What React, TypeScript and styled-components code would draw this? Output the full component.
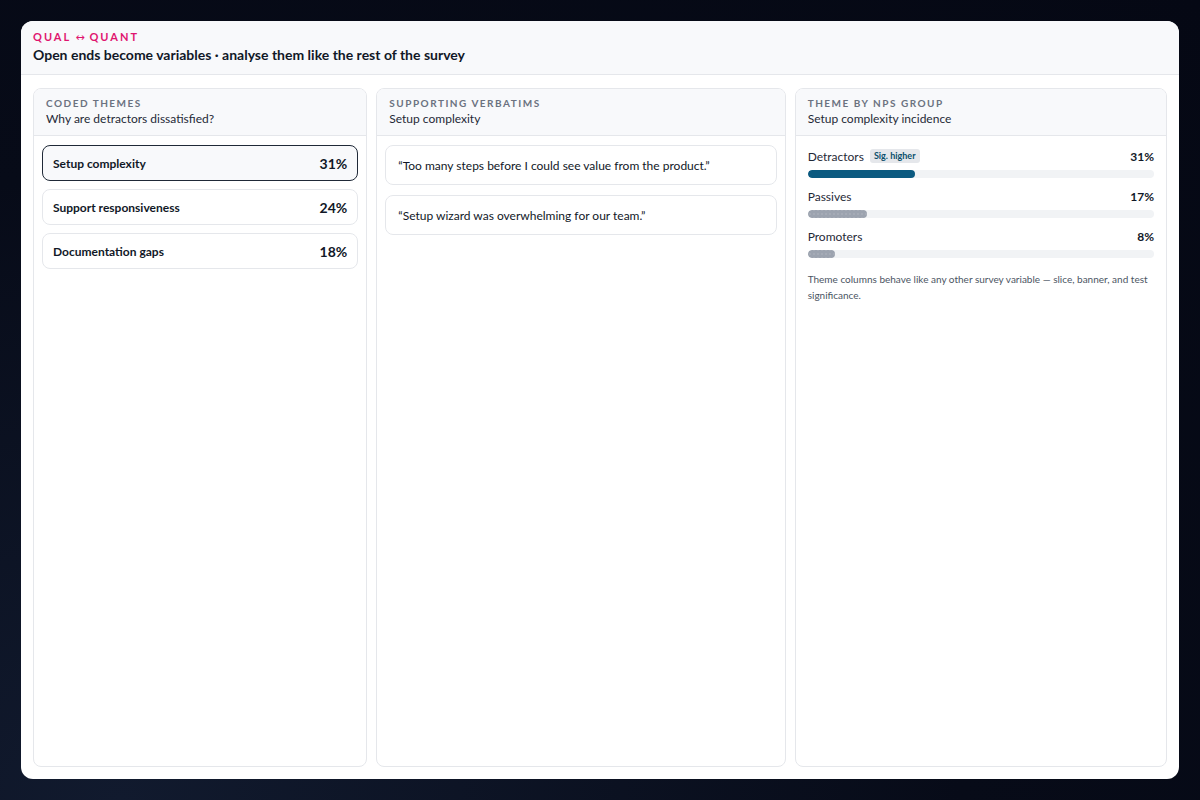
import React from 'react';
import styled, {createGlobalStyle} from 'styled-components';

type Theme = {label: string; share: number; active?: boolean};
type Group = {label: string; share: number; sig?: boolean; primary?: boolean};

const themes: Theme[] = [
  {label: 'Setup complexity', share: 31, active: true},
  {label: 'Support responsiveness', share: 24},
  {label: 'Documentation gaps', share: 18},
];

const verbatims = [
  '\u201CToo many steps before I could see value from the product.\u201D',
  '\u201CSetup wizard was overwhelming for our team.\u201D',
];

const groups: Group[] = [
  {label: 'Detractors', share: 31, sig: true, primary: true},
  {label: 'Passives', share: 17},
  {label: 'Promoters', share: 8},
];

const GlobalStyle = createGlobalStyle`
  * { box-sizing: border-box; }
  html, body {
    margin: 0;
    height: 100%;
  }
  body {
    font-family: Lato, 'Noto Sans', 'Liberation Sans', sans-serif;
    color: #111827;
    background: radial-gradient(ellipse at 10% 100%, #111a2e 0%, #070b18 55%, #050814 100%);
  }
  #root {
    height: 100%;
  }
`;

export default function App() {
  return (
    <>
      <GlobalStyle />
      <Page>
        <Card>
          <Header>
            <Eyebrow>
              QUAL <Arrow>↔</Arrow> QUANT
            </Eyebrow>
            <Title>Open ends become variables · analyse them like the rest of the survey</Title>
          </Header>

          <Columns>
            <Panel>
              <PanelHead>
                <PanelLabel>Coded themes</PanelLabel>
                <PanelSub>Why are detractors dissatisfied?</PanelSub>
              </PanelHead>
              <PanelBody>
                {themes.map((t) => (
                  <ThemeRow key={t.label} $active={t.active}>
                    <ThemeName>{t.label}</ThemeName>
                    <ThemeShare>{t.share}%</ThemeShare>
                  </ThemeRow>
                ))}
              </PanelBody>
            </Panel>

            <Panel>
              <PanelHead>
                <PanelLabel>Supporting verbatims</PanelLabel>
                <PanelSub>Setup complexity</PanelSub>
              </PanelHead>
              <PanelBody $gap={10}>
                {verbatims.map((v) => (
                  <Quote key={v}>{v}</Quote>
                ))}
              </PanelBody>
            </Panel>

            <Panel>
              <PanelHead>
                <PanelLabel>Theme by NPS group</PanelLabel>
                <PanelSub>Setup complexity incidence</PanelSub>
              </PanelHead>
              <GroupBody>
                {groups.map((g) => (
                  <GroupRow key={g.label}>
                    <GroupLine>
                      <GroupName>
                        {g.label}
                        {g.sig && <SigBadge>Sig. higher</SigBadge>}
                      </GroupName>
                      <GroupShare>{g.share}%</GroupShare>
                    </GroupLine>
                    <Track>
                      <Fill $primary={g.primary} style={{width: `${g.share}%`}} />
                    </Track>
                  </GroupRow>
                ))}
                <Note>
                  Theme columns behave like any other survey variable — slice, banner, and test
                  significance.
                </Note>
              </GroupBody>
            </Panel>
          </Columns>
        </Card>
      </Page>
    </>
  );
}

const Page = styled.div`
  height: 100%;
  padding: 21px;
  display: flex;
`;

const Card = styled.div`
  flex: 1;
  display: flex;
  flex-direction: column;
  background: #ffffff;
  border-radius: 12px;
  overflow: hidden;
`;

const Header = styled.div`
  background: #f8f9fb;
  border-bottom: 1px solid #e5e7eb;
  padding: 9px 12px 10px;
`;

const Eyebrow = styled.div`
  color: #e0156f;
  font-size: 11px;
  font-weight: 700;
  letter-spacing: 2px;
  line-height: 14px;
`;

const Arrow = styled.span`
  font-family: 'DejaVu Sans', sans-serif;
  font-weight: 400;
  font-size: 11px;
  letter-spacing: 0;
`;

const Title = styled.div`
  font-size: 14px;
  font-weight: 700;
  color: #111827;
  line-height: 18px;
  margin-top: 1px;
`;

const Columns = styled.div`
  flex: 1;
  display: grid;
  grid-template-columns: 334fr 409fr 372fr;
  gap: 9px;
  padding: 13px 12px 12px;
`;

const Panel = styled.div`
  border: 1px solid #e5e7eb;
  border-radius: 8px;
  overflow: hidden;
  display: flex;
  flex-direction: column;
`;

const PanelHead = styled.div`
  background: #f8f9fb;
  border-bottom: 1px solid #e5e7eb;
  padding: 8px 12px 8px;
`;

const PanelLabel = styled.div`
  font-size: 10px;
  font-weight: 700;
  letter-spacing: 1.5px;
  text-transform: uppercase;
  color: #6b7280;
  line-height: 13px;
`;

const PanelSub = styled.div`
  font-size: 12px;
  color: #1f2937;
  line-height: 16px;
  margin-top: 1px;
`;

const PanelBody = styled.div<{$gap?: number}>`
  display: flex;
  flex-direction: column;
  gap: ${(p) => p.$gap ?? 8}px;
  padding: 9px 8px;
`;

const ThemeRow = styled.div<{$active?: boolean}>`
  height: 36px;
  display: flex;
  align-items: center;
  justify-content: space-between;
  padding: 0 10px;
  border-radius: 8px;
  border: 1px solid ${(p) => (p.$active ? '#1f2937' : '#e5e7eb')};
  background: ${(p) => (p.$active ? '#f8f9fb' : '#ffffff')};
`;

const ThemeName = styled.span`
  font-size: 12px;
  font-weight: 700;
  color: #111827;
`;

const ThemeShare = styled.span`
  font-size: 14px;
  font-weight: 700;
  color: #111827;
`;

const Quote = styled.div`
  height: 40px;
  display: flex;
  align-items: center;
  padding: 0 12px;
  border: 1px solid #e5e7eb;
  border-radius: 8px;
  font-size: 12px;
  color: #111827;
`;

const GroupBody = styled.div`
  padding: 12px 12px;
  display: flex;
  flex-direction: column;
  gap: 10px;
`;

const GroupRow = styled.div`
  display: flex;
  flex-direction: column;
  gap: 6px;
`;

const GroupLine = styled.div`
  display: flex;
  align-items: center;
  justify-content: space-between;
  height: 16px;
`;

const GroupName = styled.span`
  display: flex;
  align-items: center;
  gap: 6px;
  font-size: 12px;
  color: #1f2937;
`;

const SigBadge = styled.span`
  font-size: 9px;
  font-weight: 700;
  color: #0b4f6c;
  background: #e5e7eb;
  border-radius: 3px;
  padding: 2px 4px;
  line-height: 10px;
`;

const GroupShare = styled.span`
  font-size: 12px;
  font-weight: 700;
  color: #111827;
`;

const Track = styled.div`
  height: 8px;
  border-radius: 4px;
  background: #f1f3f5;
  overflow: hidden;
`;

const Fill = styled.div<{$primary?: boolean}>`
  height: 100%;
  border-radius: 4px;
  background-color: ${(p) => (p.$primary ? '#0b5a80' : '#9ca3af')};
  background-image: ${(p) =>
    p.$primary
      ? 'none'
      : 'radial-gradient(circle, rgba(255,255,255,0.28) 0.5px, transparent 0.8px)'};
  background-size: 4px 4px;
  background-position: 0 2px;
`;

const Note = styled.p`
  margin: 3px 0 0;
  font-size: 10px;
  line-height: 16px;
  color: #4b5563;
`;
